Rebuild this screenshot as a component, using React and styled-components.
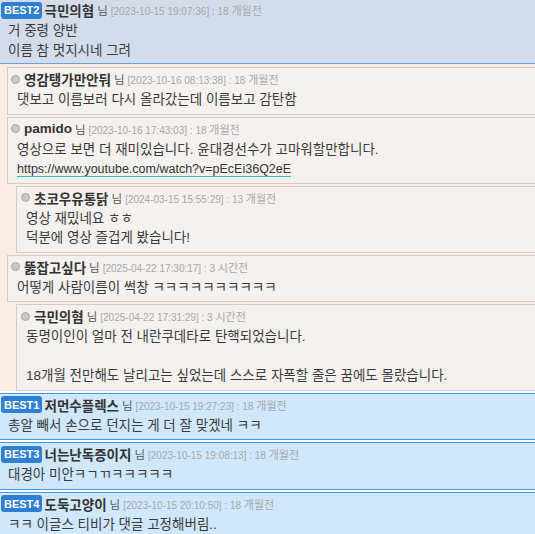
import React from "react";
import styled, { createGlobalStyle } from "styled-components";

const GlobalStyle = createGlobalStyle`
  html, body {
    margin: 0;
    padding: 0;
    background: #ffffff;
  }
  body {
    font-family: "Liberation Sans", Arial, "Noto Sans CJK KR", sans-serif;
    color: #3a3a3a;
    overflow: hidden;
  }
`;

const Page = styled.div`
  width: 535px;
  display: flex;
  flex-direction: column;
`;

const Best = styled.div`
  background: ${(p) => (p.$muted ? "#d3dcea" : "#d0e7fc")};
  border-top: 1px solid ${(p) => (p.$muted ? "#6d9fd8" : "#3f9be8")};
  border-bottom: 1px solid ${(p) => (p.$muted ? "#6d9fd8" : "#3f9be8")};
  margin-top: ${(p) => (p.$first ? "-2px" : "2px")};
  padding: 1px 0 ${(p) => (p.$first ? 3 : 4)}px 0;
`;

const Header = styled.div`
  height: 20px;
  display: flex;
  align-items: center;
  white-space: nowrap;
  padding-left: ${(p) => p.$indent || 0}px;
`;

const Badge = styled.span`
  display: inline-flex;
  align-items: center;
  justify-content: center;
  height: 17px;
  padding: 0 3px;
  margin-right: 2px;
  border-radius: 3px;
  background: #2f80d2;
  color: #ffffff;
  font-family: "Liberation Sans", Arial, sans-serif;
  font-weight: bold;
  font-size: 11px;
`;

const Dot = styled.span`
  width: 7px;
  height: 7px;
  border-radius: 50%;
  background: #c8c8c8;
  border: 1px solid #a9a9a9;
  margin-right: 4px;
  flex: none;
`;

const Name = styled.span`
  font-weight: bold;
  font-size: 13.5px;
  color: #333333;
`;

const Nim = styled.span`
  font-size: 11.5px;
  color: #555555;
  margin-left: 3px;
`;

const Meta = styled.span`
  font-size: 10px;
  color: #a8a8a8;
  margin-left: 3px;
`;

const Unit = styled.span`
  font-size: 11px;
`;

const Body = styled.div`
  margin-top: 1px;
  padding-left: ${(p) => p.$indent}px;
  font-size: 13.5px;
  color: #3a3a3a;
  white-space: nowrap;
`;

const Line = styled.div`
  height: 19.5px;
  line-height: 19.5px;
`;

const Link = styled.a`
  font-size: 12.5px;
  color: #333333;
  text-decoration: none;
  border-bottom: 1px solid #2cc0b4;
`;

const ReplyArea = styled.div`
  background: #fcece6;
  padding: 1px 0 0 0;
  display: flex;
  flex-direction: column;
`;

const Reply = styled.div`
  margin-top: 2px;
  margin-left: ${(p) => (p.$nested ? 16 : 7)}px;
  background: #f4f1ee;
  border: 1px solid #d7cac6;
  border-right: none;
  padding: 1px 0 4px 0;
`;

const Stamp = ({ date, count, unit }) => (
  <Meta>
    [{date}] : {count} <Unit>{unit}</Unit>
  </Meta>
);

const BestComment = ({ rank, name, date, count, unit, lines, muted, first }) => (
  <Best $muted={muted} $first={first}>
    <Header $indent={1}>
      <Badge>BEST{rank}</Badge>
      <Name>{name}</Name>
      <Nim>님</Nim>
      <Stamp date={date} count={count} unit={unit} />
    </Header>
    <Body $indent={8}>
      {lines.map((l, i) => (
        <Line key={i}>{l}</Line>
      ))}
    </Body>
  </Best>
);

const ReplyComment = ({ nested, name, date, count, unit, children }) => (
  <Reply $nested={nested}>
    <Header $indent={nested ? 4 : 3}>
      <Dot />
      <Name>{name}</Name>
      <Nim>님</Nim>
      <Stamp date={date} count={count} unit={unit} />
    </Header>
    <Body $indent={9}>{children}</Body>
  </Reply>
);

export default function App() {
  return (
    <Page>
      <GlobalStyle />
      <BestComment
        first
        muted
        rank={2}
        name="극민의혐"
        date="2023-10-15 19:07:36"
        count="18"
        unit="개월전"
        lines={["거 중령 양반", "이름 참 멋지시네 그려"]}
      />
      <ReplyArea>
        <ReplyComment name="영감탱가만안둬" date="2023-10-16 08:13:38" count="18" unit="개월전">
          <Line>댓보고 이름보러 다시 올라갔는데 이름보고 감탄함</Line>
        </ReplyComment>
        <ReplyComment name="pamido" date="2023-10-16 17:43:03" count="18" unit="개월전">
          <Line>영상으로 보면 더 재미있습니다. 윤대경선수가 고마워할만합니다.</Line>
          <Line>
            <Link href="#">https://www.youtube.com/watch?v=pEcEi36Q2eE</Link>
          </Line>
        </ReplyComment>
        <ReplyComment nested name="초코우유통닭" date="2024-03-15 15:55:29" count="13" unit="개월전">
          <Line>영상 재밌네요 ㅎㅎ</Line>
          <Line>덕분에 영상 즐겁게 봤습니다!</Line>
        </ReplyComment>
        <ReplyComment name="뚫잡고싶다" date="2025-04-22 17:30:17" count="3" unit="시간전">
          <Line>어떻게 사람이름이 썩창 ㅋㅋㅋㅋㅋㅋㅋㅋㅋㅋ</Line>
        </ReplyComment>
        <ReplyComment nested name="극민의혐" date="2025-04-22 17:31:29" count="3" unit="시간전">
          <Line>동명이인이 얼마 전 내란쿠데타로 탄핵되었습니다.</Line>
          <Line />
          <Line>18개월 전만해도 날리고는 싶었는데 스스로 자폭할 줄은 꿈에도 몰랐습니다.</Line>
        </ReplyComment>
      </ReplyArea>
      <BestComment
        rank={1}
        name="저먼수플렉스"
        date="2023-10-15 19:27:23"
        count="18"
        unit="개월전"
        lines={["총알 빼서 손으로 던지는 게 더 잘 맞겠네 ㅋㅋ"]}
      />
      <BestComment
        rank={3}
        name="너는난독증이지"
        date="2023-10-15 19:08:13"
        count="18"
        unit="개월전"
        lines={["대경아 미안ㅋㄱㄲㅋㅋㅋㅋㅋ"]}
      />
      <BestComment
        rank={4}
        name="도둑고양이"
        date="2023-10-15 20:10:50"
        count="18"
        unit="개월전"
        lines={["ㅋㅋ 이글스 티비가 댓글 고정해버림.."]}
      />
    </Page>
  );
}
